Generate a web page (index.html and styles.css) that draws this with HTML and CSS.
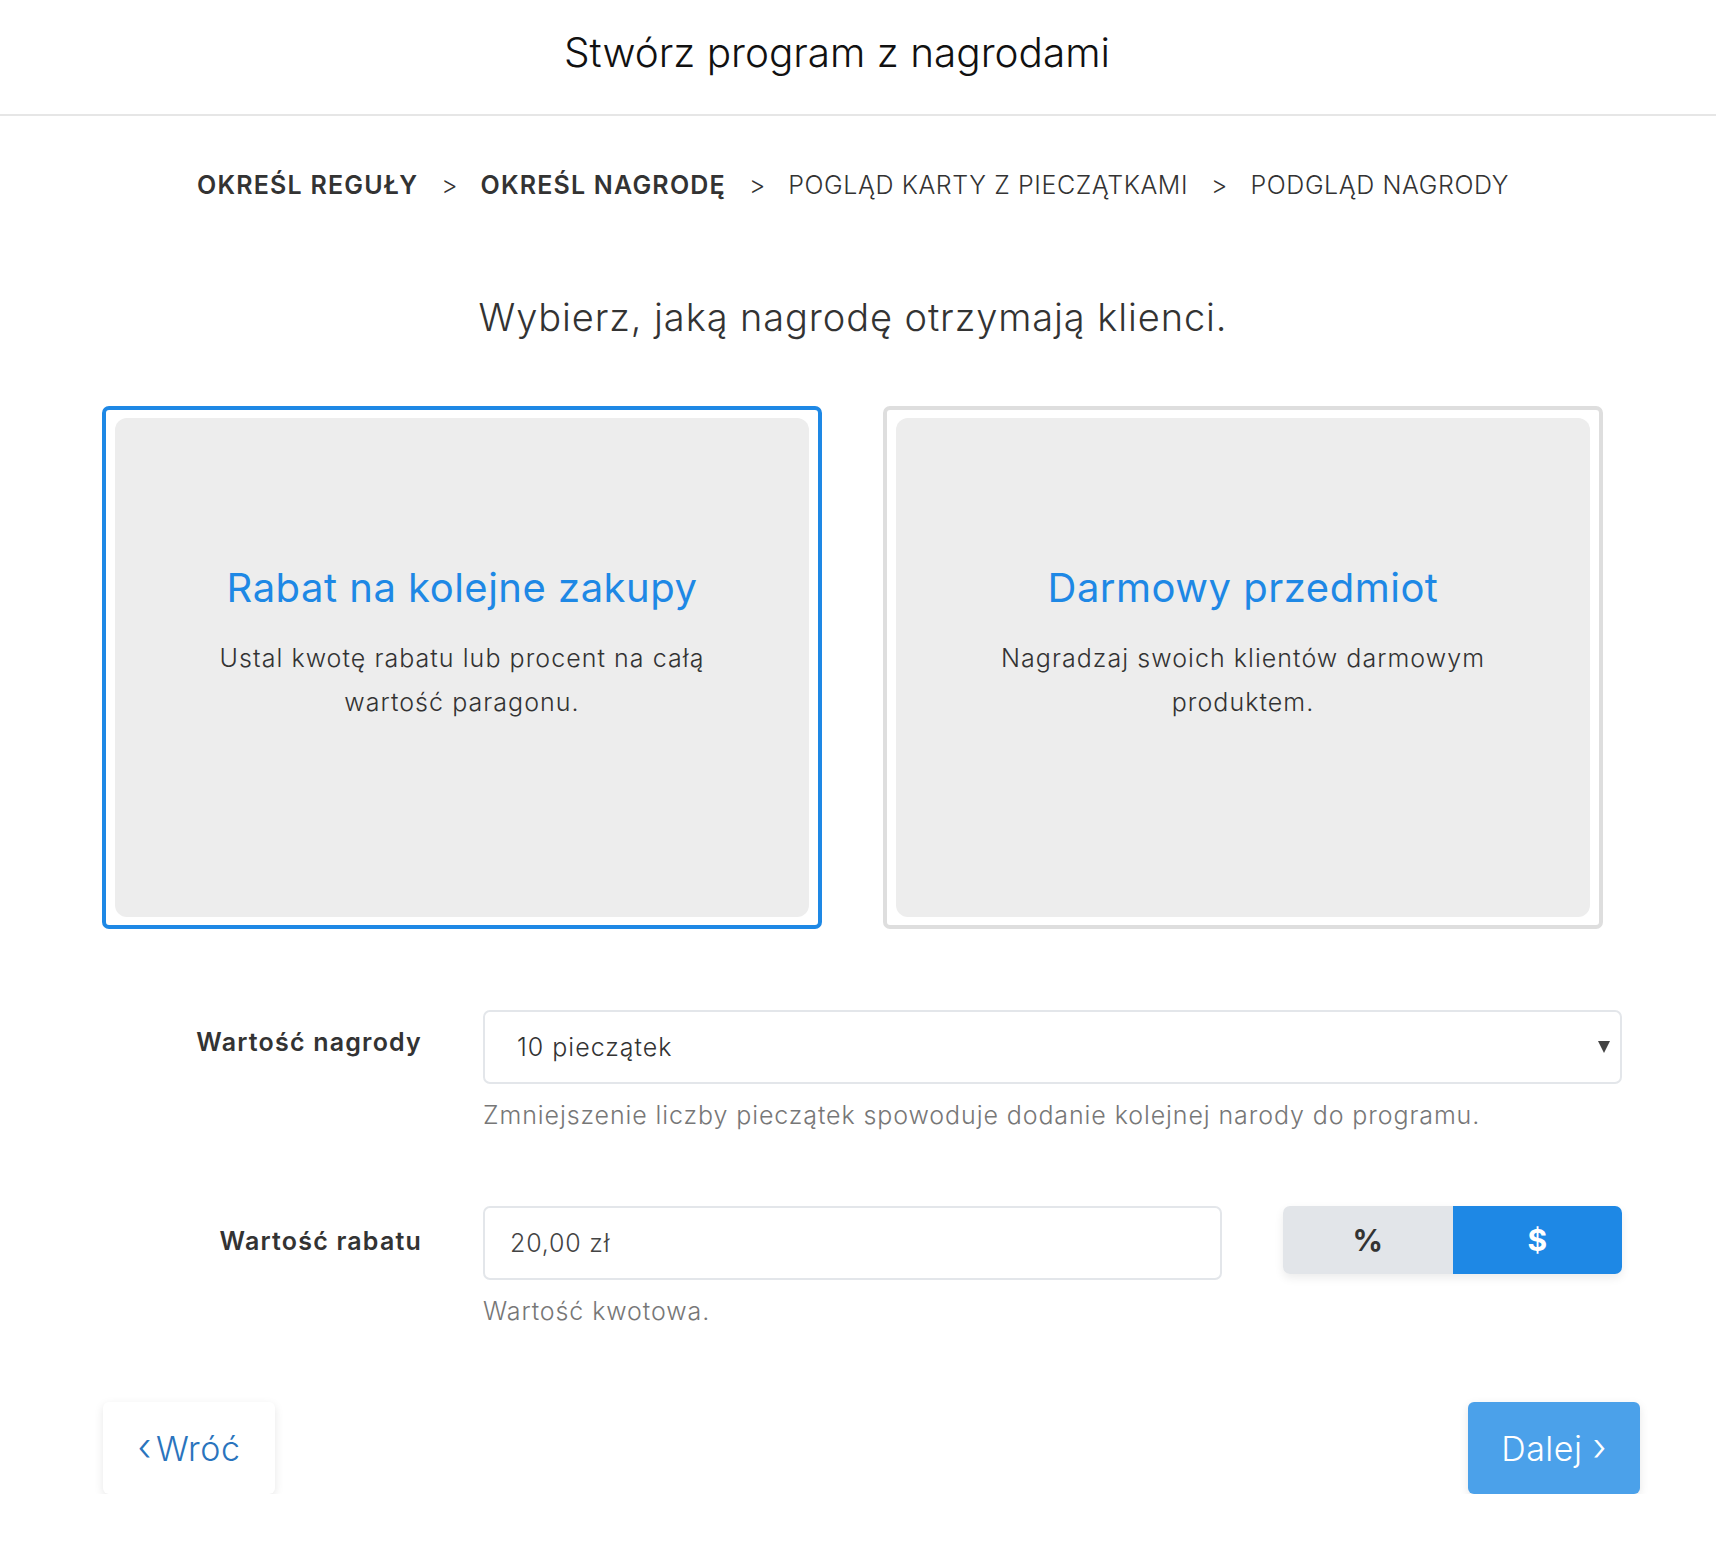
FILE: index.html
```html
<!DOCTYPE html>
<html lang="pl">
<head>
<meta charset="utf-8">
<title>Stwórz program z nagrodami</title>
<link rel="stylesheet" href="styles.css">
</head>
<body>
<header class="topbar">
  <h1 class="topbar-title">Stwórz program z nagrodami</h1>
</header>
<nav class="steps">
  <span class="step step-done">OKREŚL REGUŁY</span>
  <span class="step-sep">&gt;</span>
  <span class="step step-done">OKREŚL NAGRODĘ</span>
  <span class="step-sep">&gt;</span>
  <span class="step">POGLĄD KARTY Z PIECZĄTKAMI</span>
  <span class="step-sep">&gt;</span>
  <span class="step">PODGLĄD NAGRODY</span>
</nav>
<h2 class="lead">Wybierz, jaką nagrodę otrzymają klienci.</h2>
<section class="cards">
  <div class="card card-active">
    <div class="card-body">
      <h3 class="card-title">Rabat na kolejne zakupy</h3>
      <p class="card-text">Ustal kwotę rabatu lub procent na całą wartość paragonu.</p>
    </div>
  </div>
  <div class="card">
    <div class="card-body">
      <h3 class="card-title">Darmowy przedmiot</h3>
      <p class="card-text">Nagradzaj swoich klientów darmowym produktem.</p>
    </div>
  </div>
</section>
<section class="form">
  <div class="form-row">
    <label class="form-label">Wartość nagrody</label>
    <div class="form-field">
      <div class="select">
        <span class="select-value">10 pieczątek</span>
        <span class="select-arrow"></span>
      </div>
      <p class="help">Zmniejszenie liczby pieczątek spowoduje dodanie kolejnej narody do programu.</p>
    </div>
  </div>
  <div class="form-row row-second">
    <label class="form-label label-low">Wartość rabatu</label>
    <div class="form-field">
      <div class="input-line">
        <div class="input"><span class="input-value">20,00 zł</span></div>
        <div class="toggle">
          <span class="toggle-opt">%</span>
          <span class="toggle-opt toggle-on">$</span>
        </div>
      </div>
      <p class="help">Wartość kwotowa.</p>
    </div>
  </div>
</section>
<footer class="actions">
  <button class="btn btn-back"><span class="chev">&lsaquo;</span>Wróć</button>
  <button class="btn btn-next">Dalej<span class="chev chev-r">&rsaquo;</span></button>
</footer>
</body>
</html>
```

FILE: styles.css
```css
* { box-sizing: border-box; }
body {
  margin: 0;
  font-family: Inter, "Noto Sans", sans-serif;
  color: #333;
  background: #fff;
}
.topbar {
  height: 116px;
  border-bottom: 2px solid #e6e6e6;
  display: flex;
  justify-content: center;
  align-items: flex-start;
  padding-right: 42px;
}
.topbar-title {
  margin: 29px 0 0;
  font-size: 40.5px;
  font-weight: 300;
  color: #111;
  line-height: 48px;
}
.steps {
  display: flex;
  justify-content: center;
  align-items: center;
  gap: 23px;
  margin-top: 53px;
  height: 32px;
  font-size: 25px;
  color: #333;
  padding-right: 10px;
}
.step { font-weight: 300; letter-spacing: 0.6px; }
.step-done { font-weight: 600; letter-spacing: 1.2px; }
.step-sep { font-weight: 300; }
.lead {
  margin: 94px 0 0;
  padding-right: 10px;
  text-align: center;
  font-size: 38px;
  letter-spacing: 0.9px;
  font-weight: 300;
  line-height: 44px;
  color: #333;
}
.cards {
  display: flex;
  justify-content: center;
  gap: 61px;
  margin: 67px 0 0;
  padding-right: 11px;
}
.card {
  width: 720px;
  height: 523px;
  border: 4px solid #dedede;
  border-radius: 7px;
  padding: 8px 9px;
}
.card-active { border-color: #1e88e5; }
.card-body {
  height: 100%;
  background: #ededed;
  border-radius: 12px;
  text-align: center;
  padding: 146px 40px 0;
}
.card-title {
  margin: 0;
  font-size: 40px;
  letter-spacing: 0.5px;
  font-weight: 400;
  line-height: 48px;
  color: #1e88e5;
}
.card-text {
  margin: 24px auto 0;
  font-size: 25px;
  letter-spacing: 1.05px;
  font-weight: 300;
  line-height: 44px;
  color: #333;
  max-width: 520px;
}
.form {
  margin-top: 81px;
  padding-left: 103px;
  width: 1622px;
}
.form-row {
  display: grid;
  grid-template-columns: 319px 1fr;
  column-gap: 61px;
}
.row-second { margin-top: 74px; }
.form-label {
  text-align: right;
  font-size: 25px;
  letter-spacing: 1.2px;
  font-weight: 600;
  color: #333;
  padding-top: 17px;
  line-height: 30px;
}
.label-low { padding-top: 20px; }
.form-field { display: flex; flex-direction: column; }
.select {
  height: 74px;
  border: 2px solid #e3e6ea;
  border-radius: 7px;
  display: flex;
  align-items: center;
  justify-content: space-between;
  padding: 0 10px 0 32px;
}
.select-value { font-size: 25px; letter-spacing: 1px; font-weight: 300; color: #333; }
.select-arrow {
  width: 0; height: 0;
  border-left: 6px solid transparent;
  border-right: 6px solid transparent;
  border-top: 12px solid #444;
}
.help {
  margin: 14px 0 0;
  font-size: 25px;
  letter-spacing: 0.9px;
  font-weight: 300;
  color: #777;
  line-height: 34px;
}
.input-line { display: flex; gap: 61px; align-items: flex-start; }
.input {
  width: 739px;
  height: 74px;
  border: 2px solid #e3e6ea;
  border-radius: 7px;
  display: flex;
  align-items: center;
  padding: 0 25px;
}
.input-value { font-size: 25px; letter-spacing: 0.8px; font-weight: 300; color: #444; }
.toggle {
  width: 339px;
  height: 68px;
  display: flex;
  border-radius: 7px;
  overflow: hidden;
  box-shadow: 0 4px 10px rgba(0,0,0,0.08);
}
.toggle-opt {
  flex: 1;
  display: flex;
  align-items: center;
  justify-content: center;
  background: #e2e5e9;
  color: #333;
  font-size: 30px;
  font-weight: 700;
}
.toggle-on { background: #1e88e5; color: #fff; }
.actions {
  display: flex;
  justify-content: space-between;
  margin-top: 74px;
  padding: 0 76px 0 103px;
}
.btn {
  width: 172px;
  height: 92px;
  border: none;
  border-radius: 6px;
  font-family: Inter, "Noto Sans", sans-serif;
  font-size: 34px;
  letter-spacing: 0.5px;
  font-weight: 300;
  display: flex;
  align-items: center;
  justify-content: center;
  gap: 4px;
  box-shadow: 0 3px 10px rgba(0,0,0,0.1);
}
.btn-back { background: #fff; color: #2a74bd; }
.btn-next { background: #4ba1ea; color: #fff; }
.chev { font-size: 38px; line-height: 1; margin-top: -4px; }
.chev-r { margin-left: 6px; }
```
